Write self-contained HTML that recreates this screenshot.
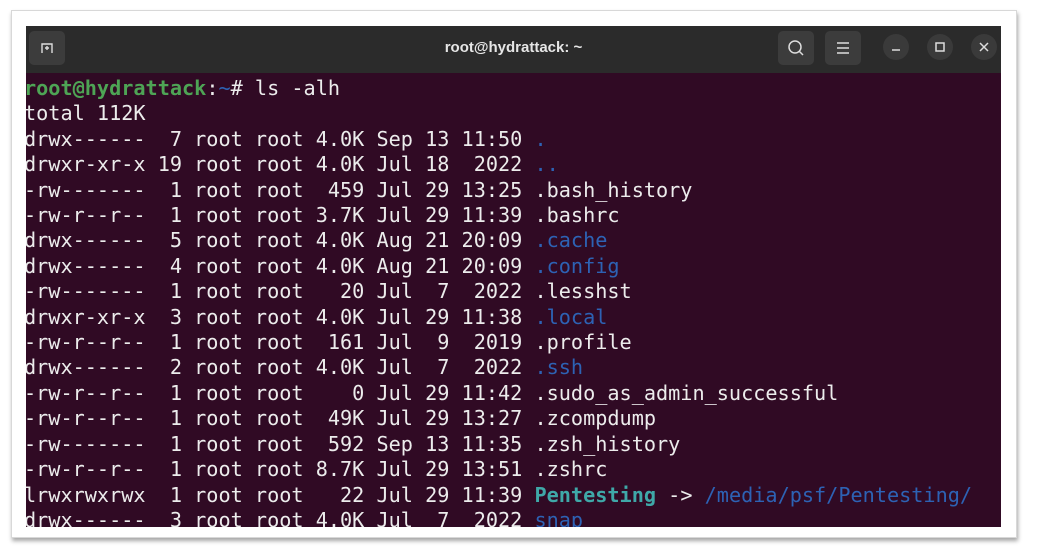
<!DOCTYPE html>
<html><head><style>
body{margin:0;width:1037px;height:557px;background:#fff;position:relative;overflow:hidden}
.frame{position:absolute;left:11px;top:10px;width:1004px;height:526px;border:1px solid #d8d8d8;box-shadow:1px 3px 4px rgba(0,0,0,.35);background:#fff}
.term{position:absolute;left:26px;top:26px;width:975px;height:501px;background:#300a24;overflow:hidden}
.bar{position:absolute;left:0;top:0;width:975px;height:47px;background:#2b2b2b}
.title{position:absolute;left:0;width:975px;top:13px;text-align:center;color:#e6e6e6;font:bold 15px "Liberation Sans",sans-serif}
.btn{position:absolute;top:5px;width:36px;height:34px;border-radius:5px;background:#3c3c3c}
.cb{position:absolute;top:21px;width:26px;height:26px;border-radius:13px;background:#3a3a3a;transform:translateY(-13px)}
pre{position:absolute;left:-2px;top:50px;margin:0;font:20.2px/25.4px "DejaVu Sans Mono","Liberation Mono",monospace;color:#ececec}
.g{color:#4ea455;font-weight:bold}.b{color:#2d62b4}.t{color:#3fa8a8;font-weight:bold}
</style></head><body>
<div class="frame"></div>
<div class="term">
<div class="bar">
<div class="btn" style="left:3px"><svg width="36" height="34"><path d="M13 22V13h10v9M16 17h4M18 15v4" stroke="#ddd" stroke-width="1.4" fill="none"/></svg></div>
<div class="title">root@hydrattack: ~</div>
<div class="btn" style="left:752px"><svg width="36" height="34"><circle cx="17" cy="16" r="6" stroke="#ddd" stroke-width="1.5" fill="none"/><path d="M21 20l4 4" stroke="#ddd" stroke-width="1.5"/></svg></div>
<div class="btn" style="left:799px"><svg width="36" height="34"><path d="M12 12h12M12 17h12M12 22h12" stroke="#ddd" stroke-width="1.5"/></svg></div>
<div class="cb" style="left:857px"><svg width="26" height="26"><path d="M9 16h8" stroke="#ddd" stroke-width="1.5"/></svg></div>
<div class="cb" style="left:901px"><svg width="26" height="26"><rect x="9" y="9" width="8" height="8" stroke="#ddd" stroke-width="1.5" fill="none"/></svg></div>
<div class="cb" style="left:945px"><svg width="26" height="26"><path d="M9 9l8 8M17 9l-8 8" stroke="#ddd" stroke-width="1.5"/></svg></div>
</div>
<pre><span class="g">root@hydrattack</span>:<span class="b">~</span># ls -alh
total 112K
drwx------  7 root root 4.0K Sep 13 11:50 <span class="b">.</span>
drwxr-xr-x 19 root root 4.0K Jul 18  2022 <span class="b">..</span>
-rw-------  1 root root  459 Jul 29 13:25 .bash_history
-rw-r--r--  1 root root 3.7K Jul 29 11:39 .bashrc
drwx------  5 root root 4.0K Aug 21 20:09 <span class="b">.cache</span>
drwx------  4 root root 4.0K Aug 21 20:09 <span class="b">.config</span>
-rw-------  1 root root   20 Jul  7  2022 .lesshst
drwxr-xr-x  3 root root 4.0K Jul 29 11:38 <span class="b">.local</span>
-rw-r--r--  1 root root  161 Jul  9  2019 .profile
drwx------  2 root root 4.0K Jul  7  2022 <span class="b">.ssh</span>
-rw-r--r--  1 root root    0 Jul 29 11:42 .sudo_as_admin_successful
-rw-r--r--  1 root root  49K Jul 29 13:27 .zcompdump
-rw-------  1 root root  592 Sep 13 11:35 .zsh_history
-rw-r--r--  1 root root 8.7K Jul 29 13:51 .zshrc
lrwxrwxrwx  1 root root   22 Jul 29 11:39 <span class="t">Pentesting</span> -&gt; <span class="b">/media/psf/Pentesting/</span>
drwx------  3 root root 4.0K Jul  7  2022 <span class="b">snap</span></pre>
</div>
</body></html>
